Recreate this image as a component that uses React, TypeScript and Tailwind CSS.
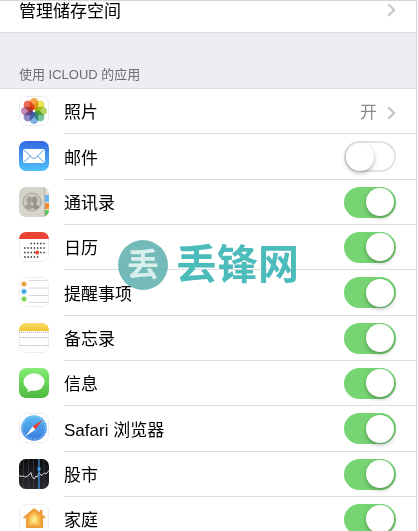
import type { ReactNode } from "react";

function Chevron() {
  return (
    <svg width="9" height="14" viewBox="0 0 9 14" fill="none" stroke="#c4c4c8" strokeWidth="2" aria-hidden="true">
      <path d="M1.200 1.200 7.200 7l-6 5.800" />
    </svg>
  );
}

function IconFrame({ children }: { children: ReactNode }) {
  return (
    <svg width="30" height="30" viewBox="0 0 30 30" className="shrink-0 overflow-hidden rounded-[7px]" aria-hidden="true">
      {children}
    </svg>
  );
}

function Outline() {
  return <rect x="0.5" y="0.5" width="29" height="29" rx="6.500" fill="none" stroke="#ececee" />;
}

const petals = ["#f5a648", "#ece452", "#b2d462", "#74c49c", "#7cb2e2", "#8c88c4", "#c688b4", "#ee6a58"];

function PhotosIcon() {
  return (
    <IconFrame>
      <rect width="30" height="30" fill="#fff" />
      {petals.map((color, i) => (
        <rect
          key={color}
          x="10.800"
          y="2"
          width="8.400"
          height="12"
          rx="4.200"
          fill={color}
          transform={`rotate(${i * 45} 15 15)`}
          className="mix-blend-multiply"
        />
      ))}
      <circle cx="15" cy="15" r="1.200" fill="#fff" />
      <Outline />
    </IconFrame>
  );
}

function MailIcon() {
  return (
    <IconFrame>
      <defs>
        <linearGradient id="mail-sky" x1="0" y1="0" x2="0" y2="1">
          <stop stopColor="#3568e3" />
          <stop offset="1" stopColor="#4fc0f7" />
        </linearGradient>
      </defs>
      <rect width="30" height="30" fill="url(#mail-sky)" />
      <rect x="4" y="8" width="22" height="14" rx="1.500" fill="#fff" />
      <path d="m4.500 8.500 8.800 8.300q1.700 1.400 3.400 0l8.800-8.300M4.500 21.500l7.200-6.500M25.500 21.500 18.300 15" fill="none" stroke="#4a8fe0" strokeWidth="0.9" />
    </IconFrame>
  );
}

function ContactsIcon() {
  return (
    <IconFrame>
      <rect width="30" height="30" fill="#d6d4c8" />
      <rect x="25" width="1.500" height="30" fill="#b5b3aa" />
      <rect x="26" width="4" height="8" fill="#dddbd2" />
      <rect x="26" y="8" width="4" height="7" fill="#68b8ef" />
      <rect x="26" y="15" width="4" height="1" fill="#e4e2da" />
      <rect x="26" y="16" width="4" height="6" fill="#f28b31" />
      <rect x="26" y="22" width="4" height="1" fill="#e4e2da" />
      <rect x="26" y="23" width="4" height="7" fill="#61c75a" />
      <circle cx="13" cy="15" r="9" fill="#cbc8be" stroke="#a39f97" />
      <path d="M5.500 19.500c1-1.500 3.500-1.500 3.800-2.500-2.500-2.500-2.400-7.500 1-7.500s3.300 5 1.200 7.500c.2 1.200 2.500 1.200 3 3-1.500 3-7 3-9-.5Z" fill="#a39f97" />
      <path d="M20.500 19.500c-1-1.500-3.500-1.500-3.800-2.500 2.500-2.500 2.400-7.500-1-7.500s-3.300 5-1.200 7.500c.2 1.200-1 1.200-1 3 1.500 3 5.500 3 7-.5Z" fill="#98948c" />
    </IconFrame>
  );
}

function CalendarIcon() {
  return (
    <IconFrame>
      <rect width="30" height="30" fill="#fff" />
      <Outline />
      <rect width="30" height="7" fill="#e84335" />
      <g stroke="#222" strokeWidth="1.400" strokeDasharray="1.400 1.800">
        <path d="M11.500 11.500h14M5.200 16h20.500M5.200 20.500h20.500M5.200 25h14" />
      </g>
      <circle cx="18.200" cy="20.500" r="2" fill="#e84335" />
    </IconFrame>
  );
}

function RemindersIcon() {
  return (
    <IconFrame>
      <rect width="30" height="30" fill="#fff" />
      <path d="M10 3.500h20M10 11h20M10 18.500h20M10 25.500h20" stroke="#d4d4d6" strokeWidth="0.9" />
      {[
        { color: "#e69a32", cy: 7 },
        { color: "#3e9fe5", cy: 14.5 },
        { color: "#75cf45", cy: 22 },
      ].map(({ color, cy }) => (
        <g key={color} fill={color}>
          <circle cx="5" cy={cy} r="3" opacity="0.4" />
          <circle cx="5" cy={cy} r="2" />
        </g>
      ))}
      <Outline />
    </IconFrame>
  );
}

function NotesIcon() {
  return (
    <IconFrame>
      <defs>
        <linearGradient id="notes-band" x1="0" y1="0" x2="0" y2="1">
          <stop stopColor="#f9dc6a" />
          <stop offset="1" stopColor="#f4c52e" />
        </linearGradient>
      </defs>
      <rect width="30" height="30" fill="#fff" />
      <Outline />
      <rect width="30" height="8" fill="url(#notes-band)" />
      <path d="M0 9.300h30" stroke="#b5b0a4" strokeDasharray="1 1" />
      <path d="M0 14.500h30M0 22.500h30" stroke="#d2d2d4" />
    </IconFrame>
  );
}

function MessagesIcon() {
  return (
    <IconFrame>
      <defs>
        <linearGradient id="messages-green" x1="0" y1="0" x2="0" y2="1">
          <stop stopColor="#86ed76" />
          <stop offset="1" stopColor="#4cb93d" />
        </linearGradient>
      </defs>
      <rect width="30" height="30" fill="url(#messages-green)" />
      <ellipse cx="15" cy="14" rx="10.500" ry="8.800" fill="#fff" />
      <path d="M9.500 19.500c.2 2-.5 3.300-1.800 4.300 2.500.2 4.800-1 6-2.500Z" fill="#fff" />
    </IconFrame>
  );
}

function SafariIcon() {
  return (
    <IconFrame>
      <defs>
        <linearGradient id="safari-dial" x1="0" y1="0" x2="0" y2="1">
          <stop stopColor="#58bdf0" />
          <stop offset="1" stopColor="#3978df" />
        </linearGradient>
      </defs>
      <rect width="30" height="30" fill="#fff" />
      <circle cx="15" cy="15" r="12.800" fill="url(#safari-dial)" />
      <circle cx="15" cy="15" r="11.300" fill="none" stroke="#a9d8f7" strokeWidth="1.200" strokeDasharray="0.7 1.100" />
      <path d="M23.500 6.800 13.600 13.500l2.900 3Z" fill="#ee4238" />
      <path d="m6.500 23.200 7.100-9.700 2.900 3Z" fill="#fff" />
      <Outline />
    </IconFrame>
  );
}

function StocksIcon() {
  return (
    <IconFrame>
      <defs>
        <linearGradient id="stocks-night" x1="0" y1="0" x2="0" y2="1">
          <stop stopColor="#0c0d10" />
          <stop offset="1" stopColor="#2a2b2e" />
        </linearGradient>
      </defs>
      <rect width="30" height="30" fill="url(#stocks-night)" />
      <path d="M4.500 0v30M9.500 0v30M14.500 0v30M25 0v30" stroke="#37393d" strokeWidth="0.8" />
      <path d="m0 16.500 2 1 2-.5 2 1 2-.5 2-1.500 2-2.500 1 4 2 2.500 2-3 1.500 1 1.500-4.500 2 3 1.500-1 2-1.500 1.500 1 2-2.500 3-2" fill="none" stroke="#e8e8e8" strokeWidth="0.9" />
      <path d="M20 0v30" stroke="#3c94dc" strokeWidth="1.300" />
      <circle cx="20" cy="10" r="1.700" fill="#4aa5ee" />
    </IconFrame>
  );
}

function HomeIcon() {
  return (
    <IconFrame>
      <rect width="30" height="30" fill="#fff" />
      <path d="M15 4 4 13.500l1.200 1.300L7 13.500V24h17V13.500l1.500 1.300 1.200-1.300-3.200-2.800V6h-2.800v2.300Z" fill="#ed9b35" />
      <path d="m15.200 7-6 5.200v9.600h12.500v-9.600Z" fill="#f5b64b" />
      <path d="m15.200 10-3.900 3.500v6.300h8v-6.300Z" fill="#fad56a" />
      <path d="m15.200 12.800-2 1.800v3.400h4.200v-3.400Z" fill="#fbe78d" />
      <Outline />
    </IconFrame>
  );
}

type AppItem = { id: string; name: string; icon: ReactNode; on?: boolean };

const apps: AppItem[] = [
  { id: "photos", name: "照片", icon: <PhotosIcon /> },
  { id: "mail", name: "邮件", icon: <MailIcon />, on: false },
  { id: "contacts", name: "通讯录", icon: <ContactsIcon />, on: true },
  { id: "calendar", name: "日历", icon: <CalendarIcon />, on: true },
  { id: "reminders", name: "提醒事项", icon: <RemindersIcon />, on: true },
  { id: "notes", name: "备忘录", icon: <NotesIcon />, on: true },
  { id: "messages", name: "信息", icon: <MessagesIcon />, on: true },
  { id: "safari", name: "Safari 浏览器", icon: <SafariIcon />, on: true },
  { id: "stocks", name: "股市", icon: <StocksIcon />, on: true },
  { id: "home", name: "家庭", icon: <HomeIcon />, on: true },
];

function Switch({ id, on }: { id: string; on: boolean }) {
  return (
    <input
      id={id}
      type="checkbox"
      role="switch"
      defaultChecked={on}
      className="flex h-[31px] w-[52px] shrink-0 cursor-pointer appearance-none items-center rounded-full border-2 border-[#e3e3e5] bg-white before:block before:size-7 before:rounded-full before:bg-white before:shadow-[0_2px_4px_rgba(0,0,0,0.3)] checked:border-[#76d572] checked:bg-[#76d572] checked:before:ml-5"
    />
  );
}

function AppRow({ item }: { item: AppItem }) {
  return (
    <li className="flex h-[45px] gap-[15px] pl-[19px] nth-[3n+2]:h-[46px]">
      <div className="flex items-center pb-0.5">{item.icon}</div>
      <div className="flex flex-1 items-center justify-between border-b border-[#dedee0] pr-5">
        {item.on === undefined ? (
          <button type="button" className="flex flex-1 items-center justify-between pt-1 text-left">
            <span>{item.name}</span>
            <span className="flex items-center gap-2.5 text-[#8a8a8f]">
              开
              <Chevron />
            </span>
          </button>
        ) : (
          <>
            <label htmlFor={item.id} className="pt-1">
              {item.name}
            </label>
            <Switch id={item.id} on={item.on} />
          </>
        )}
      </div>
    </li>
  );
}

export default function App() {
  return (
    <div className="h-screen bg-white pr-px">
      <main className="relative h-full overflow-hidden border-t border-r border-[#d5d5d8] bg-white font-['Liberation_Sans','Noto_Sans_CJK_SC',sans-serif] text-[17px] leading-6 text-black">
        <button type="button" className="flex h-8 w-full items-start justify-between border-b border-[#dcdce0] pr-5 pl-[19px]">
          <span className="-mt-px">管理储存空间</span>
          <span className="pt-0.5">
            <Chevron />
          </span>
        </button>
        <h2 className="flex h-14 items-end border-b border-[#dcdce0] bg-[#eeedf3] pb-[3px] pl-[19px] text-[13px] leading-5 font-normal text-[#6d6d72]">
          使用 ICLOUD 的应用
        </h2>
        <ul>
          {apps.map((item) => (
            <AppRow key={item.id} item={item} />
          ))}
        </ul>
        <div className="pointer-events-none absolute top-[239px] left-[118px] flex items-center gap-2 font-bold">
          <span className="flex size-[50px] items-center justify-center rounded-full bg-[#65b2b0]/90 text-[32px] leading-none text-[#d9efee]">丢</span>
          <span className="text-[41px] leading-[50px] text-[#4bbcb9]">丢锋网</span>
        </div>
      </main>
    </div>
  );
}
